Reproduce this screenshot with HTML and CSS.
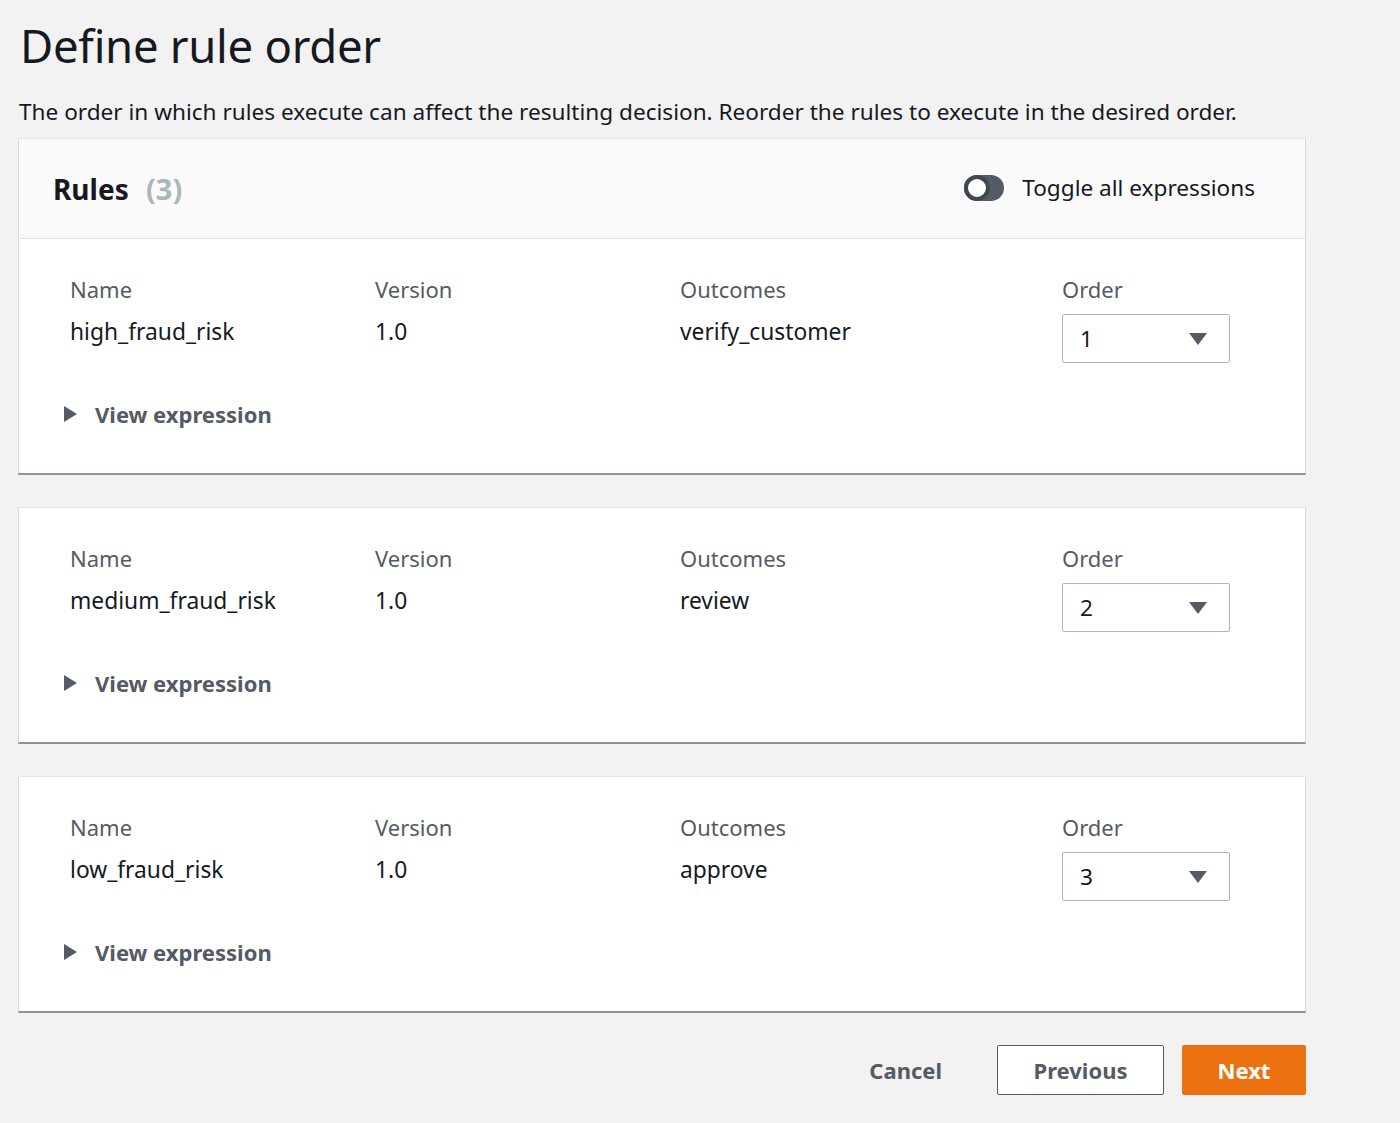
FILE: index.html
```html
<!DOCTYPE html>
<html>
<head>
<meta charset="utf-8">
<link rel="stylesheet" href="styles.css">
</head>
<body>
<div class="page">
  <h1 class="title">Define rule order</h1>
  <p class="desc">The order in which rules execute can affect the resulting decision. Reorder the rules to execute in the desired order.</p>

  <div class="card">
    <div class="card-header">
      <h2 class="rules-title">Rules <span class="count">(3)</span></h2>
      <label class="toggle">
        <span class="switch"><span class="knob"></span></span>
        <span class="toggle-label">Toggle all expressions</span>
      </label>
    </div>
    <div class="card-body">
      <div class="grid">
        <div class="col"><div class="lbl">Name</div><div class="val">high_fraud_risk</div></div>
        <div class="col"><div class="lbl">Version</div><div class="val">1.0</div></div>
        <div class="col"><div class="lbl">Outcomes</div><div class="val">verify_customer</div></div>
        <div class="col"><div class="lbl">Order</div><div class="select"><span>1</span><span class="caret"></span></div></div>
      </div>
      <div class="expand"><span class="tri"></span>View expression</div>
    </div>
  </div>

  <div class="card">
    <div class="card-body">
      <div class="grid">
        <div class="col"><div class="lbl">Name</div><div class="val">medium_fraud_risk</div></div>
        <div class="col"><div class="lbl">Version</div><div class="val">1.0</div></div>
        <div class="col"><div class="lbl">Outcomes</div><div class="val">review</div></div>
        <div class="col"><div class="lbl">Order</div><div class="select"><span>2</span><span class="caret"></span></div></div>
      </div>
      <div class="expand"><span class="tri"></span>View expression</div>
    </div>
  </div>

  <div class="card">
    <div class="card-body">
      <div class="grid">
        <div class="col"><div class="lbl">Name</div><div class="val">low_fraud_risk</div></div>
        <div class="col"><div class="lbl">Version</div><div class="val">1.0</div></div>
        <div class="col"><div class="lbl">Outcomes</div><div class="val">approve</div></div>
        <div class="col"><div class="lbl">Order</div><div class="select"><span>3</span><span class="caret"></span></div></div>
      </div>
      <div class="expand"><span class="tri"></span>View expression</div>
    </div>
  </div>

  <div class="actions">
    <button class="btn btn-link">Cancel</button>
    <button class="btn btn-normal">Previous</button>
    <button class="btn btn-primary">Next</button>
  </div>
</div>
</body>
</html>
```

FILE: styles.css
```css
html, body {
  margin: 0;
  padding: 0;
  background: #f2f2f2;
}
body {
  font-family: "Noto Sans", "Open Sans", sans-serif;
  color: #16191f;
}
.page {
  width: 1288px;
  padding: 14px 0 0 18px;
}
.title {
  margin: 0 0 0 2px;
  font-size: 45.5px;
  font-weight: 400;
  line-height: 62px;
  letter-spacing: -0.3px;
}
.desc {
  margin: 21px 0 11px 1px;
  font-size: 22.6px;
  line-height: 30px;
}
.card {
  background: #fff;
  border-left: 1px solid #d5dbdb;
  border-right: 1px solid #d5dbdb;
  border-top: 1px solid #e6e6e6;
  border-bottom: 2px solid #879596;
  margin-bottom: 32px;
}
.card-header {
  background: #fafafa;
  height: 99px;
  border-bottom: 1px solid #e0e0e0;
  display: flex;
  align-items: center;
  justify-content: space-between;
  padding: 0 50px 0 34px;
}
.rules-title {
  margin: 0;
  font-size: 28px;
  font-weight: 700;
}
.count {
  color: #aab7b8;
  font-weight: 700;
  margin-left: 10px;
  font-size: 29px;
}
.toggle {
  display: flex;
  align-items: center;
  gap: 18px;
  font-size: 22.6px;
  margin-top: -2px;
}
.switch {
  width: 40px;
  height: 26px;
  border-radius: 13px;
  background: #545b64;
  position: relative;
  display: inline-block;
}
.knob {
  position: absolute;
  left: 0;
  top: 0;
  width: 18px;
  height: 18px;
  border-radius: 50%;
  background: #fff;
  border: 4px solid #414750;
}
.card-body {
  padding: 34px 0 43px 51px;
}
.grid {
  display: grid;
  grid-template-columns: 305px 305px 382px 168px;
}
.lbl {
  font-size: 22px;
  line-height: 32px;
  color: #545b64;
}
.val {
  font-size: 22.8px;
  line-height: 32px;
  margin-top: 11px;
}
.select {
  margin-top: 9px;
  height: 49px;
  border: 1px solid #aab7b8;
  border-radius: 2px;
  display: flex;
  align-items: center;
  justify-content: space-between;
  padding: 0 22px 0 17px;
  font-size: 22.6px;
  box-sizing: border-box;
  width: 168px;
}
.caret {
  width: 0;
  height: 0;
  border-left: 9px solid transparent;
  border-right: 9px solid transparent;
  border-top: 12px solid #545b64;
}
.expand {
  display: flex;
  align-items: center;
  margin-top: 35px;
  margin-left: -6px;
  font-size: 22px;
  font-weight: 700;
  color: #545b64;
  line-height: 32px;
}
.tri {
  width: 0;
  height: 0;
  border-top: 8px solid transparent;
  border-bottom: 8px solid transparent;
  border-left: 13px solid #545b64;
  margin-right: 18px;
}
.actions {
  display: flex;
  justify-content: flex-end;
  align-items: center;
  gap: 18px;
}
.btn {
  font-family: "Noto Sans", "Open Sans", sans-serif;
  font-size: 22px;
  font-weight: 700;
  height: 50px;
  border-radius: 2px;
  cursor: pointer;
  padding: 0 20px;
}
.btn-link {
  background: transparent;
  border: 1px solid transparent;
  color: #545b64;
  margin-right: 16px;
}
.btn-normal {
  background: #fff;
  border: 1px solid #545b64;
  color: #545b64;
  width: 167px;
}
.btn-primary {
  background: #ec7211;
  border: 1px solid #ec7211;
  color: #fff;
  width: 124px;
}
```
